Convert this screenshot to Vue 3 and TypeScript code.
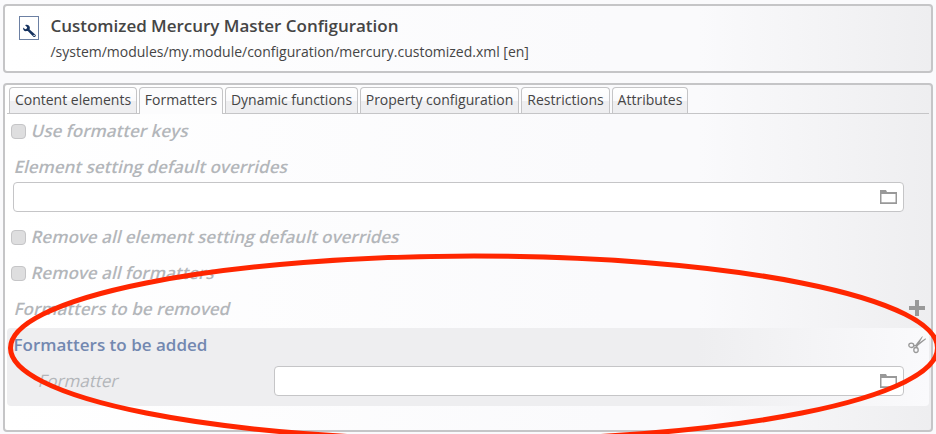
<script setup lang="ts">
interface Tab {
  id: string
  label: string
  width: number
}

const tabs: Tab[] = [
  { id: 'content', label: 'Content elements', width: 128 },
  { id: 'formatters', label: 'Formatters', width: 84 },
  { id: 'functions', label: 'Dynamic functions', width: 133 },
  { id: 'properties', label: 'Property configuration', width: 159 },
  { id: 'restrictions', label: 'Restrictions', width: 89 },
  { id: 'attributes', label: 'Attributes', width: 76 },
]
const activeTab = 'formatters'
</script>

<template>
  <div class="editor">
    <header class="panel header">
      <svg class="type-icon" viewBox="0 0 20 24" width="20" height="24">
        <rect x="0.5" y="0.5" width="19" height="23" fill="#fff" stroke="#6c80a3" />
        <path
          d="M6.1 9.2 8.2 11.3 7.6 12.8 6.2 13.2 4.2 11.4C3.8 13.4 4.9 15.1 6.8 15.2 7.8 15.2 8.4 15 9 15.2L14.2 20.4C14.9 21.2 16.2 21.1 16.6 20.2 17 19.5 16.8 18.9 16.2 18.4L10.6 13.6C10.6 12.9 11 12.3 10.8 11.3 10.4 9.3 8.4 8.2 6.1 9.2Z"
          fill="#15325f"
        />
        <circle cx="15.1" cy="19.4" r="0.7" fill="#fff" />
      </svg>
      <div class="heading">
        <h1 class="title">Customized Mercury Master Configuration</h1>
        <p class="path">/system/modules/my.module/configuration/mercury.customized.xml [en]</p>
      </div>
    </header>

    <main class="panel form">
      <nav class="tabs">
        <div
          v-for="tab in tabs"
          :key="tab.id"
          class="tab"
          :class="{ active: tab.id === activeTab }"
          :style="{ width: tab.width + 'px' }"
        >
          {{ tab.label }}
        </div>
      </nav>

      <div class="row first">
        <span class="checkbox"></span>
        <span class="label">Use formatter keys</span>
      </div>
      <div class="row">
        <span class="label plain">Element setting default overrides</span>
      </div>
      <div class="field wide">
        <svg class="folder" viewBox="0 0 17 14" width="17" height="14">
          <path d="M0 0H6L7 2H17V14H0ZM1.5 4V12.3H15.5V4Z" fill="#999" fill-rule="evenodd" />
        </svg>
      </div>
      <div class="row">
        <span class="checkbox"></span>
        <span class="label">Remove all element setting default overrides</span>
      </div>
      <div class="row">
        <span class="checkbox"></span>
        <span class="label">Remove all formatters</span>
      </div>
      <div class="row">
        <span class="label plain">Formatters to be removed</span>
        <svg class="action" viewBox="0 0 18 18" width="18" height="18">
          <path d="M7 0H11V6H17V10H11V16H7V10H1V6H7Z" fill="#999" />
        </svg>
      </div>

      <section class="group">
        <div class="row">
          <span class="label group-label">Formatters to be added</span>
          <svg class="action" viewBox="0 1 18 18" width="18" height="18">
            <g fill="none" stroke="#999">
              <ellipse cx="3.3" cy="10.3" rx="2.5" ry="2.2" stroke-width="1.3" />
              <ellipse cx="8" cy="15" rx="2.2" ry="2.5" stroke-width="1.3" />
            </g>
            <path d="M5.4 10.2 8.5 9.4 17.5 3.2 18 4.3 9.5 11 5.7 11.4Z" fill="#999" />
            <path d="M7.5 12.8 8.3 8.8 13.8 1.8 15 1.2 10.1 10.2 8.7 13.2Z" fill="#999" />
          </svg>
        </div>
        <div class="row nested">
          <span class="label sub-label">Formatter</span>
          <div class="field narrow">
            <svg class="folder" viewBox="0 0 17 14" width="17" height="14">
              <path d="M0 0H6L7 2H17V14H0ZM1.5 4V12.3H15.5V4Z" fill="#999" fill-rule="evenodd" />
            </svg>
          </div>
        </div>
      </section>
    </main>

    <svg class="highlight" viewBox="0 0 936 434" width="936" height="434">
      <ellipse cx="474" cy="348" rx="463.5" ry="92" fill="none" stroke="#ff2600" stroke-width="5" />
    </svg>
  </div>
</template>

<style>
body {
  margin: 0;
  overflow: hidden;
}
</style>

<style scoped>
.editor {
  position: relative;
  box-sizing: border-box;
  width: 936px;
  height: 434px;
  padding: 4px 3px 2px;
  overflow: hidden;
  display: flex;
  flex-direction: column;
  gap: 10px;
  background: #fafafc;
  color: #454545;
  font-family: 'Open Sans', sans-serif;
  font-size: 14px;
}
.panel {
  box-sizing: border-box;
  width: 930px;
  border: 2px solid #c5c5c7;
  border-radius: 4px;
  background: linear-gradient(to right, #fff 0%, #fafafc 65%, #fafafc 75%, #eeeef0 100%);
}
.header {
  height: 69px;
  display: flex;
  padding: 10px 14px;
  gap: 11.5px;
}
.type-icon {
  flex: none;
}
.title {
  margin: 0;
  font-size: 17px;
  line-height: 20px;
  font-weight: 600;
  letter-spacing: -0.02px;
  white-space: nowrap;
}
.path {
  margin: 6px 0 0;
  line-height: 20px;
  letter-spacing: -0.01px;
  white-space: nowrap;
}
.form {
  height: 349px;
  padding: 2px;
}
.tabs {
  box-sizing: border-box;
  display: flex;
  gap: 2px;
  height: 27px;
  padding-left: 2px;
  border-bottom: 1px solid #c5c5c7;
}
.tab {
  box-sizing: border-box;
  height: 26px;
  border: 1px solid #c5c5c7;
  border-bottom: 0;
  border-radius: 4px 4px 0 0;
  background: linear-gradient(#fff 0, #fafafc 50%, #eeeef0 51%, #eeeef0 100%);
  line-height: 24px;
  text-align: center;
  white-space: nowrap;
}
.tab.active {
  height: 27px;
  background: #fcfcfd;
}
.row {
  display: flex;
  align-items: center;
  height: 36px;
  padding: 0 3px 0 4px;
}
.row.first {
  height: 35px;
}
.row.first .label {
  margin-top: -1px;
}
.checkbox {
  box-sizing: border-box;
  flex: none;
  width: 15px;
  height: 15px;
  margin-right: 6px;
  border: 1px solid #c5c5c7;
  border-radius: 4px;
  background: #dededf;
}
.label {
  color: #b3b6ba;
  font-size: 17px;
  font-weight: 600;
  line-height: 22px;
  white-space: nowrap;
  transform: skewX(-14deg);
}
.plain {
  margin-left: 4px;
}
.field {
  box-sizing: border-box;
  display: flex;
  align-items: center;
  justify-content: flex-end;
  height: 30px;
  padding-right: 6px;
  border: 1px solid #c5c5c7;
  border-radius: 4px;
  background: #fff;
}
.wide {
  width: 891px;
  margin: -3px 0 7px 6px;
}
.narrow {
  flex: none;
  width: 630px;
}
.action {
  margin-left: auto;
}
.group {
  height: 78px;
  margin-top: 1px;
  border-radius: 4px;
  background: linear-gradient(to right, #eeeef0 0%, #eeeef0 75%, #fafafc 100%);
}
.group .row {
  height: 34px;
}
.group-label {
  margin-left: 2.5px;
  color: #7388b0;
  transform: none;
}
.group .nested {
  height: 38px;
  padding-left: 32px;
}
.sub-label {
  flex: none;
  width: 235px;
  font-weight: 400;
}
.highlight {
  position: absolute;
  top: 0;
  left: 0;
  pointer-events: none;
}
</style>
